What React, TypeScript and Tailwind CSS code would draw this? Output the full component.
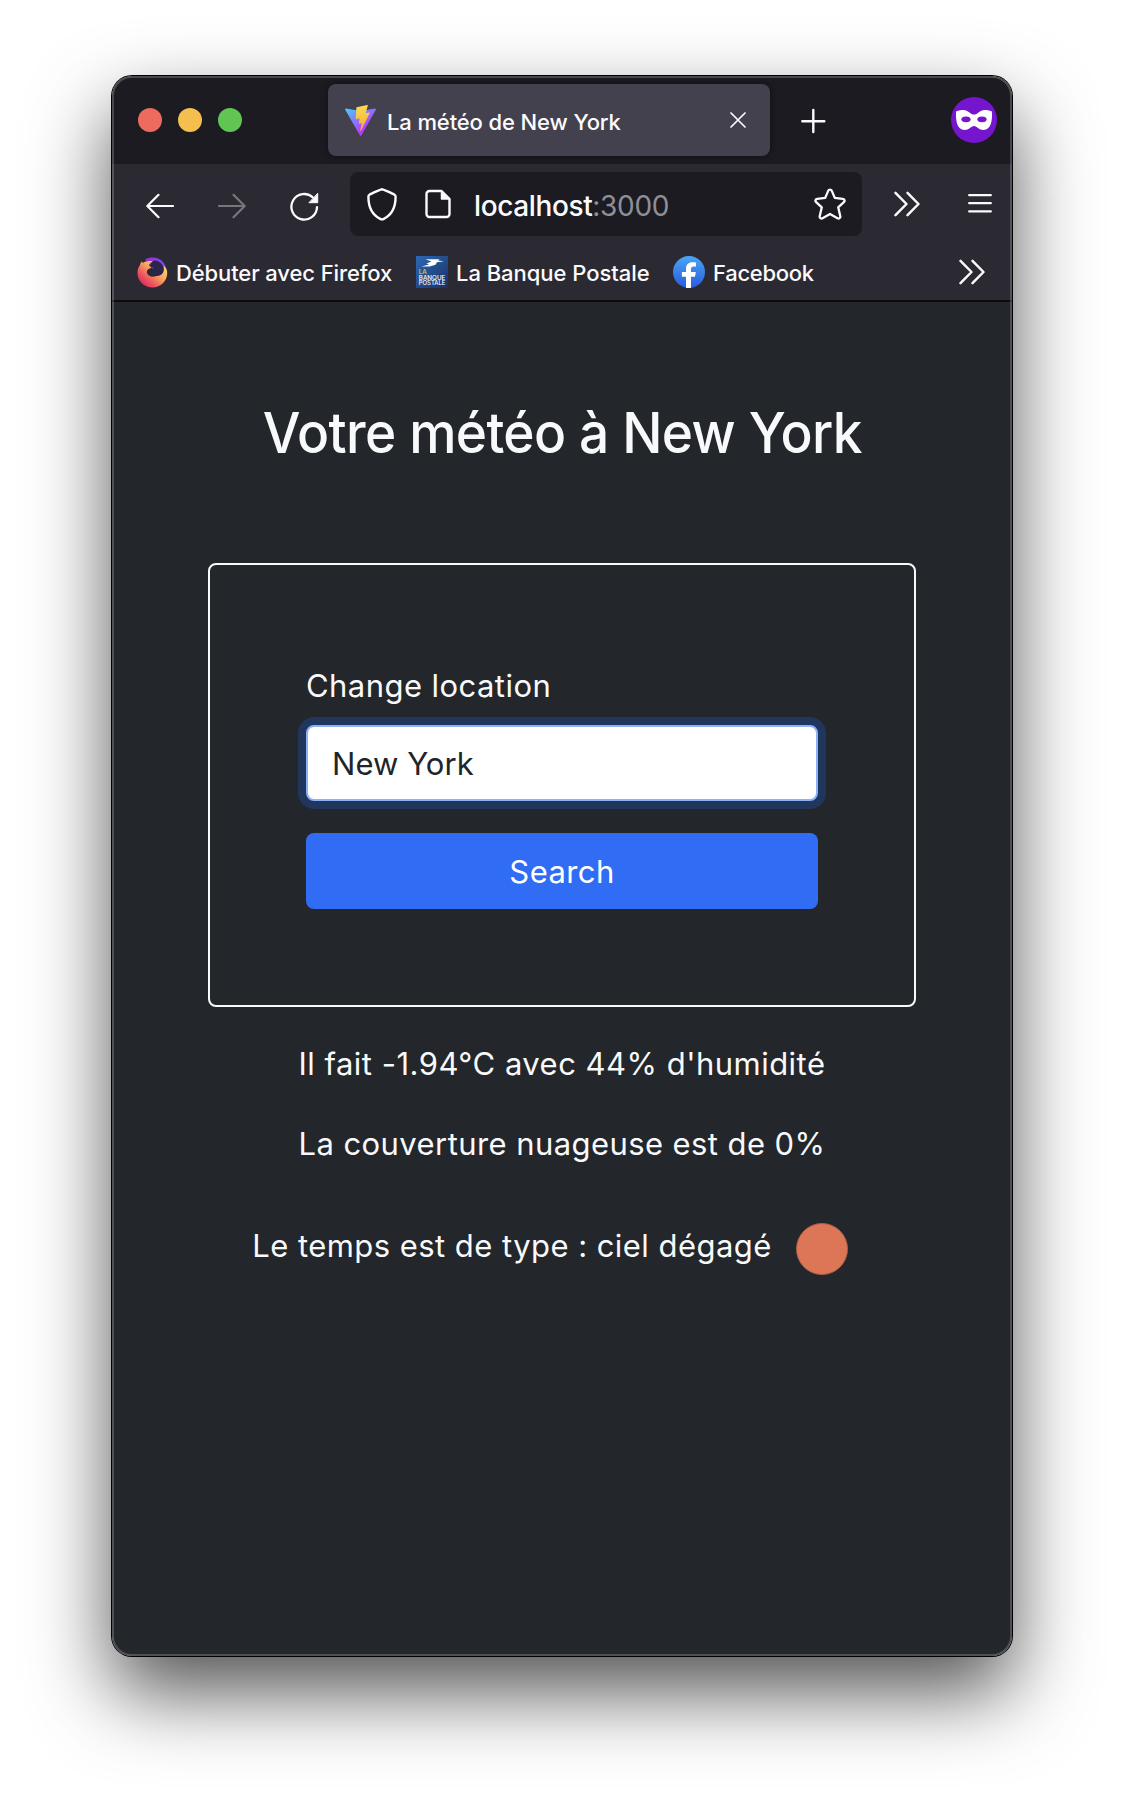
import type { ReactNode } from "react";

const line = {
  fill: "none",
  stroke: "currentColor",
  strokeWidth: 2.2,
  strokeLinecap: "round" as const,
  strokeLinejoin: "round" as const,
};

function ViteLogo() {
  return (
    <svg className="h-[31px] w-[31px] shrink-0" viewBox="8 0 394 394">
      <defs>
        <linearGradient id="vite-v" x1="6" y1="33" x2="235" y2="344" gradientUnits="userSpaceOnUse">
          <stop stopColor="#41D1FF" />
          <stop offset="1" stopColor="#BD34FE" />
        </linearGradient>
        <linearGradient id="vite-bolt" x1="194.651" y1="8.818" x2="236.076" y2="292.989" gradientUnits="userSpaceOnUse">
          <stop stopColor="#FFE36A" />
          <stop offset="0.083" stopColor="#FBD94E" />
          <stop offset="1" stopColor="#F6AE3A" />
        </linearGradient>
      </defs>
      <path
        fill="url(#vite-v)"
        d="M399.641 59.5246L215.643 388.545C211.844 395.338 202.084 395.378 198.228 388.618L10.5817 59.5563C6.38087 52.1896 12.6802 43.2665 21.0281 44.7586L205.223 77.6824C206.398 77.8924 207.601 77.8904 208.776 77.6763L389.119 44.8058C397.439 43.2894 403.768 52.1434 399.641 59.5246Z"
      />
      <path
        fill="url(#vite-bolt)"
        d="M292.965 1.5744L156.801 28.2552C154.563 28.6937 152.906 30.5903 152.771 32.8664L144.395 174.33C144.198 177.662 147.258 180.248 150.51 179.498L188.42 170.749C191.967 169.931 195.172 173.055 194.443 176.622L183.18 231.775C182.422 235.487 185.907 238.661 189.532 237.56L212.947 230.446C216.577 229.344 220.065 232.527 219.297 236.242L201.398 322.875C200.278 328.294 207.486 331.249 210.492 326.603L212.5 323.5L323.454 102.072C325.312 98.3645 322.108 94.137 318.036 94.9228L279.014 102.454C275.347 103.161 272.227 99.746 273.262 96.1583L298.731 7.86689C299.767 4.27314 296.636 0.855181 292.965 1.5744Z"
      />
    </svg>
  );
}

function CloseIcon() {
  return (
    <svg className="h-4 w-4" viewBox="0 0 16 16" {...line} strokeWidth={1.7}>
      <path d="M1 1l14 14M15 1L1 15" />
    </svg>
  );
}

function PlusIcon() {
  return (
    <svg className="h-[26px] w-[26px]" viewBox="0 0 26 26" {...line} strokeWidth={2.4}>
      <path d="M13.300 2v22M2.300 13.300h22" />
    </svg>
  );
}

function PrivateMask() {
  return (
    <svg className="h-[46px] w-[46px]" viewBox="0 0 46 46">
      <circle cx="23" cy="23" r="23" fill="#7515ce" />
      <path
        fill="#fff"
        d="M5 14.6C8 13.2 10.500 13 12.600 13C17 13 19.700 17.600 23 17.600S29 13 33.400 13C35.500 13 38 13.200 41 14.600C41.400 24 40 33 32.600 33C27.500 33 26 29 23 29S18.500 33 13.400 33C6 33 4.600 24 5 14.600Z"
      />
      <ellipse cx="15" cy="22.300" rx="4.600" ry="2.900" fill="#7515ce" />
      <ellipse cx="31" cy="22.300" rx="4.600" ry="2.900" fill="#7515ce" />
    </svg>
  );
}

function ArrowIcon({ forward = false }: { forward?: boolean }) {
  return (
    <svg
      className={forward ? "h-7 w-7 rotate-180 text-[#77767d]" : "h-7 w-7 text-[#fbfbfe]"}
      viewBox="0 0 28 28"
      {...line}
    >
      <path d="M27 14H1.500M12.500 2.800L1.300 14l11.200 11.200" />
    </svg>
  );
}

function ReloadIcon() {
  return (
    <svg className="h-[30px] w-[29px]" viewBox="0 0 29 30" {...line} strokeWidth={2.3}>
      <path d="M27 16.200a12.800 12.800 0 1 1-4-9.700" />
      <path d="M27.700 2.700v9h-8.400z" fill="currentColor" strokeWidth="1" />
    </svg>
  );
}

function ShieldIcon() {
  return (
    <svg className="h-[34px] w-[30px]" viewBox="0 0 30 34" {...line} strokeWidth={2.4}>
      <path d="M15 2.200C16 2.200 26.300 7 27.500 7.700C28.400 8.200 28.600 8.800 28.600 9.800C28.600 20 25.500 27.500 16.800 31.900C15.600 32.500 14.400 32.500 13.200 31.900C4.500 27.500 1.400 20 1.400 9.800C1.400 8.800 1.600 8.200 2.500 7.700C3.700 7 14 2.200 15 2.200Z" />
    </svg>
  );
}

function DocumentIcon() {
  return (
    <svg className="h-[30px] w-[26px]" viewBox="0 0 26 30" {...line} strokeWidth={2.4}>
      <path d="M16.500 2H4.500a3 3 0 0 0-3 3v20a3 3 0 0 0 3 3h17a3 3 0 0 0 3-3V10z" />
      <path d="M16.500 2v8h8z" fill="currentColor" strokeWidth="1.500" />
    </svg>
  );
}

function StarIcon() {
  return (
    <svg className="h-8 w-8" viewBox="0 0 32 32" {...line} strokeWidth={2.3}>
      <path d="M14.300 2.600C15 1.200 17 1.200 17.700 2.600L20.800 9.900L28.700 10.900C30.500 11.100 31.200 13 29.900 14.200L24.200 19.300L26.300 28.200C26.600 29.900 25 31.100 23.500 30.300L16 26L8.500 30.300C7 31.100 5.400 29.900 5.700 28.200L7.800 19.300L2.100 14.200C.8 13 1.500 11.100 3.300 10.900L11.200 9.900Z" />
    </svg>
  );
}

function ChevronsIcon() {
  return (
    <svg className="h-[26px] w-[26px]" viewBox="0 0 26 26" {...line} strokeWidth={2.4}>
      <path d="M1.500 1.800L12.500 13L1.500 24.200M13.500 1.800L24.500 13L13.500 24.200" />
    </svg>
  );
}

function MenuIcon() {
  return (
    <svg className="h-6 w-6" viewBox="0 0 24 24" {...line} strokeWidth={2.3}>
      <path d="M1.200 3.200h21.600M1.200 11.200h21.600M1.200 19.400h21.600" />
    </svg>
  );
}

function FirefoxIcon() {
  return (
    <svg className="h-[31px] w-[31px]" viewBox="0 0 31 31">
      <defs>
        <linearGradient id="fx-body" x1="26" y1="5" x2="7" y2="27" gradientUnits="userSpaceOnUse">
          <stop stopColor="#ffe06a" />
          <stop offset="0.450" stopColor="#f9a45f" />
          <stop offset="0.750" stopColor="#ee5f60" />
          <stop offset="1" stopColor="#e0335f" />
        </linearGradient>
        <linearGradient id="fx-globe" x1="8" y1="2" x2="28" y2="14" gradientUnits="userSpaceOnUse">
          <stop stopColor="#a02fd0" />
          <stop offset="1" stopColor="#6a50f0" />
        </linearGradient>
      </defs>
      <path fill="url(#fx-globe)" d="M8 2.500C14-.5 22-.2 26.500 5.500C29.500 9.500 30 14 29 18L20 20L14 8Z" />
      <path
        fill="url(#fx-body)"
        d="M2.800 8.500C3 6.800 3.800 5.300 5 4.200C5.200 5 5.500 5.500 6 6C7.500 4.800 10 3.600 15.500 4.200C13.400 5.200 12 7 12.200 8.600C13.200 9.800 14 10 14.500 11C10.500 11.500 9.500 14 10.200 16.500C11.500 19.500 15.500 20.500 19.500 18.900C24 18.800 27.500 14.500 26.700 8.800C29 10.500 30.500 13 30.200 17C29.500 25 23 30.500 15.500 30.500C7 30.500 .5 24 .5 16C.5 13 1.200 10.500 2.800 8.500Z"
      />
      <path fill="#2d2549" d="M17.500 3.600C22.500 3.800 26.800 8 26.800 12.500C26.800 16.500 23.500 19 19.800 18.900C16.500 18.900 14 17 13.700 14.800C13.500 12.800 15 11.800 17 11.300C15.500 10 14 9.800 13.700 8.300C13.600 6.500 15.500 4.400 17.500 3.600Z" />
    </svg>
  );
}

function BanquePostaleIcon() {
  return (
    <svg className="h-8 w-8" viewBox="0 0 32 32">
      <defs>
        <linearGradient id="lbp" x1="0" y1="0" x2="32" y2="32" gradientUnits="userSpaceOnUse">
          <stop stopColor="#2b68b5" />
          <stop offset="0.550" stopColor="#234a87" />
          <stop offset="1" stopColor="#1f2c66" />
        </linearGradient>
      </defs>
      <rect width="32" height="32" fill="url(#lbp)" />
      <path fill="#fff" d="M9.500 3.200H23.500L22 4.600L28 5.200L21 6.300L19.500 8.800L13.500 10.600L5.500 10.600L13 8.600L10.500 7.400L15.500 5.600Z" />
      <g fontFamily="Inter, sans-serif" fontWeight="500" fontSize="5.600">
        <text x="2.800" y="18" fill="#f0d21c" textLength="8" lengthAdjust="spacingAndGlyphs">LA</text>
        <text x="2.800" y="23.600" fill="#fff" textLength="26.500" lengthAdjust="spacingAndGlyphs">BANQUE</text>
        <text x="2.800" y="29.200" fill="#fff" textLength="26.500" lengthAdjust="spacingAndGlyphs">POSTALE</text>
      </g>
    </svg>
  );
}

function FacebookIcon() {
  return (
    <svg className="h-8 w-8" viewBox="0 0 32 32">
      <defs>
        <linearGradient id="fb" x1="16" y1="0" x2="16" y2="32" gradientUnits="userSpaceOnUse">
          <stop stopColor="#4aa5f5" />
          <stop offset="1" stopColor="#2a5bdc" />
        </linearGradient>
      </defs>
      <circle cx="16" cy="16" r="16" fill="url(#fb)" />
      <path fill="#fff" d="M13 31.800V20.700H8.900V16.100H13V12.700C13 8.400 15.500 6.200 19.300 6.200C20.700 6.200 22 6.300 23 6.500V10.400H20.800C18.700 10.400 18 11.500 18 12.900V16.100H22.800L22 20.700H18V31.800C16.400 32.100 14.500 32.100 13 31.800Z" />
    </svg>
  );
}

function Bookmark({ icon, className, children }: { icon: ReactNode; className: string; children: ReactNode }) {
  return (
    <div className="flex items-center">
      {icon}
      <span className={`pt-[2px] text-[22px] leading-7 font-medium whitespace-nowrap ${className}`}>{children}</span>
    </div>
  );
}

function TabBar() {
  return (
    <div className="flex h-[88px] items-center bg-[#1c1b22] pr-[15px] pl-[26px]">
      <div className="flex gap-4">
        <span className="h-6 w-6 rounded-full bg-[#ed6a5e]" />
        <span className="h-6 w-6 rounded-full bg-[#f4bf4f]" />
        <span className="h-6 w-6 rounded-full bg-[#61c554]" />
      </div>
      <div className="ml-[86px] flex h-[72px] w-[442px] items-center rounded-lg bg-[#42414d] pr-[24px] pl-[17px] shadow-[0_0_6px_rgba(0,0,0,0.5)]">
        <ViteLogo />
        <span className="ml-[11px] pt-[3px] text-[22px] leading-7 font-medium tracking-[-0.12px] whitespace-nowrap">
          La météo de New York
        </span>
        <span className="ml-auto">
          <CloseIcon />
        </span>
      </div>
      <span className="ml-[30px] pt-[2px]">
        <PlusIcon />
      </span>
      <span className="ml-auto">
        <PrivateMask />
      </span>
    </div>
  );
}

function Toolbar() {
  return (
    <div className="h-[138px] border-b-2 border-[#0c0c0d] bg-[#2b2a33]">
      <div className="flex h-20 items-center pr-[20px] pl-[34px]">
        <div className="flex items-center gap-11 pt-[3px]">
          <ArrowIcon />
          <ArrowIcon forward />
          <ReloadIcon />
        </div>
        <div className="ml-[31px] flex h-16 w-[512px] items-center rounded-lg bg-[#1c1b22] pr-[16px] pl-[17px]">
          <ShieldIcon />
          <span className="ml-[28px]">
            <DocumentIcon />
          </span>
          <span className="ml-[23px] pt-[3px] text-[28px] leading-9 font-medium tracking-[-0.38px]">
            localhost<span className="font-normal tracking-[-0.3px] text-[#8f8f98]">:3000</span>
          </span>
          <span className="ml-auto">
            <StarIcon />
          </span>
        </div>
        <span className="ml-[32px]">
          <ChevronsIcon />
        </span>
        <span className="ml-auto">
          <MenuIcon />
        </span>
      </div>
      <div className="flex h-14 items-center pr-[27px] pl-[25px]">
        <Bookmark icon={<FirefoxIcon />} className="w-[224px] pl-[8px] tracking-[-0.11px]">
          Débuter avec Firefox
        </Bookmark>
        <div className="ml-[24px]">
          <Bookmark icon={<BanquePostaleIcon />} className="w-[201px] pl-[8px] tracking-[-0.04px]">
            La Banque Postale
          </Bookmark>
        </div>
        <div className="ml-[24px]">
          <Bookmark icon={<FacebookIcon />} className="ml-[8px] tracking-[-0.3px]">
            Facebook
          </Bookmark>
        </div>
        <span className="ml-auto">
          <ChevronsIcon />
        </span>
      </div>
    </div>
  );
}

function WeatherPage() {
  return (
    <div className="flex flex-1 flex-col items-center bg-[#23262a] text-[31px] leading-[48px] text-[#f8f9fa]">
      <h1 className="mt-[98px] scale-x-95 text-[56px] leading-[67px] font-medium tracking-[-0.65px] whitespace-nowrap">
        Votre météo à New York
      </h1>
      <form className="mt-24 flex w-[708px] flex-col rounded-lg border-2 border-[#f8f9fa] p-24">
        <label htmlFor="location" className="pt-px tracking-[0.44px]">
          Change location
        </label>
        <input
          id="location"
          readOnly
          value="New York"
          className="mt-[15px] h-[76px] rounded-lg border-2 border-[#8bb1f9] bg-white px-6 pt-px tracking-[0.05px] text-[#212529] shadow-[0_0_0_8px_#21365d] outline-none"
        />
        <button type="button" className="mt-8 h-[76px] rounded-lg bg-[#316cf4] pt-[2px] tracking-[0.4px] text-white">
          Search
        </button>
      </form>
      <p className="mt-[33px] tracking-[0.48px] whitespace-nowrap">Il fait -1.94°C avec 44% d'humidité</p>
      <p className="mt-8 tracking-[0.42px] whitespace-nowrap">La couverture nuageuse est de 0%</p>
      <div className="mt-[31px] flex">
        <p className="mt-[23px] tracking-[0.45px] whitespace-nowrap">Le temps est de type : ciel dégagé</p>
        <div className="flex h-[100px] w-[100px] items-center justify-center">
          <span className="h-[52px] w-[52px] rounded-full border border-[#a86048] bg-[#dd7656]" />
        </div>
      </div>
    </div>
  );
}

export default function App() {
  return (
    <div className="flex h-[1804px] w-[1124px] items-start justify-center overflow-hidden bg-white pt-[76px] font-['Inter',sans-serif] text-[#fbfbfe]">
      <div className="relative flex h-[1580px] w-[900px] flex-col overflow-hidden rounded-[20px] shadow-[0_0_0_1px_#000,0_36px_80px_rgba(0,0,0,0.68)]">
        <TabBar />
        <Toolbar />
        <WeatherPage />
        <div className="pointer-events-none absolute inset-0 rounded-[20px] border-2 border-white/20" />
      </div>
    </div>
  );
}
